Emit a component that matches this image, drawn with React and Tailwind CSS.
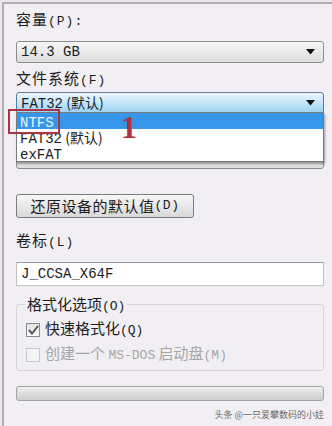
const CJK = "font-['Noto_Sans_CJK_SC',sans-serif]";

// latin parts look like a half-width bitmap font, so keep them mono and a bit smaller
const M = ({ children, className = "" }) => (
  <span className={`font-['Liberation_Mono',monospace] text-[13px] ${className}`}>
    {children}
  </span>
);

const Arrow = () => (
  <svg width="9" height="6" viewBox="0 0 9 6" className="shrink-0">
    <path d="M0 0h9L4.5 5.5z" fill="#111" />
  </svg>
);

const Check = ({ checked, disabled }) => (
  <span
    className={`w-[14px] h-[14px] border flex items-center justify-center shrink-0 ${
      disabled ? "border-[#c8c8c8] bg-[#f4f4f4]" : "border-[#8a8a8a] bg-gradient-to-b from-[#e4e4e4] to-[#fafafa]"
    }`}
  >
    {checked && (
      <svg width="11" height="10" viewBox="0 0 11 10">
        <path d="M1 5l3 3.5L10 1" stroke="#555" strokeWidth="2" fill="none" />
      </svg>
    )}
  </span>
);

export default function App() {
  return (
    <div className={`w-[332px] h-[426px] bg-[#e9e7ea] pt-[2px] pl-[2px] overflow-hidden ${CJK} text-[#1c1c1c]`}>
      <div className="relative h-full border-t-2 border-l-2 border-[#b0aeb2] bg-[#f1eff3] pl-[12px] pr-[8px]">
        {/* capacity */}
        <div className="text-[15px] leading-5 mt-[5px] tracking-[1px]">
          容量<M>(P):</M>
        </div>
        <div className="mt-[9px] h-[22px] border border-[#8c8c8c] rounded-[3px] bg-gradient-to-b from-[#f6f6f6] to-[#dedede] flex items-center justify-between pl-[4px] pr-[8px]">
          <M className="text-[14px]">14.3 GB</M>
          <Arrow />
        </div>

        {/* file system */}
        <div className="text-[15px] leading-5 mt-[5px] tracking-[1px]">
          文件系统<M>(F)</M>
        </div>
        <div className="relative mt-[1px]">
          <div className="h-[22px] border border-[#5e7d93] rounded-t-[3px] bg-gradient-to-b from-[#eaf6fd] via-[#c4e6f8] to-[#9cd0f0] flex items-center justify-between pl-[4px] pr-[8px]">
            <span className="text-[14px]">
              <M className="text-[14px]">FAT32</M> (默认)
            </span>
            <Arrow />
          </div>
          {/* the select hidden under the open list */}
          <div className="h-[22px] mt-[33px] border border-[#8c8c8c] rounded-[3px] bg-gradient-to-b from-[#f6f6f6] to-[#dedede]" />

          {/* open list */}
          <div className="absolute left-0 right-0 top-[20px] border border-[#7a7a7a] bg-white shadow-[1px_2px_2px_rgba(0,0,0,0.35)] text-[14px] leading-[16px]">
            <div className="h-[16px] bg-[#3596ea] text-[#e8f4ff] pl-[3px]">
              <M className="text-[14px]">NTFS</M>
            </div>
            <div className="h-[16px] pl-[3px]">
              <M className="text-[14px]">FAT32</M> (默认)
            </div>
            <div className="h-[16px] pl-[3px]">
              <M className="text-[14px]">exFAT</M>
            </div>
          </div>

          {/* red marker */}
          <div className="absolute left-[-8px] top-[17px] w-[52px] h-[25px] border-2 border-[#a83448]" />
          <div className="absolute left-[105px] top-[20px] text-[32px] leading-[30px] font-bold text-[#b32f44] font-['Liberation_Serif',serif]">
            1
          </div>
        </div>

        {/* restore button */}
        <div className="mt-[25px] w-[178px] h-[24px] border border-[#7c7c7c] rounded-[3px] bg-gradient-to-b from-[#f7f7f7] to-[#d9d9d9] flex items-center justify-center text-[15px] tracking-[0.5px]">
          还原设备的默认值<M>(D)</M>
        </div>

        {/* volume label */}
        <div className="text-[15px] leading-5 mt-[12px] tracking-[1px]">
          卷标<M>(L)</M>
        </div>
        <div className="mt-[9px] h-[24px] border border-[#c3c3c3] border-t-[#9c9c9c] bg-white flex items-center pl-[4px]">
          <M className="text-[14px]">J_CCSA_X64F</M>
        </div>

        {/* format options */}
        <div className="relative mt-[18px] h-[67px] border border-[#d6d4d8] rounded-[3px] pt-[13px] pl-[9px]">
          <div className="absolute left-[8px] top-[-11px] bg-[#f1eff3] px-[2px] text-[15px] leading-5">
            格式化选项<M>(O)</M>
          </div>
          <div className="flex items-center gap-[5px] text-[15px] leading-5">
            <Check checked />
            <span>
              快速格式化<M>(Q)</M>
            </span>
          </div>
          <div className="flex items-center gap-[5px] text-[15px] leading-5 mt-[2px] text-[#a6a6a6]">
            <Check disabled />
            <span>
              创建一个 <M>MS-DOS</M> 启动盘<M>(M)</M>
            </span>
          </div>
        </div>

        {/* progress */}
        <div className="mt-[15px] h-[15px] border border-[#a2a2a2] rounded-[3px] bg-gradient-to-b from-[#f2f2f2] via-[#dcdcdc] to-[#cfcfcf]" />

        <div className="mt-[8px] text-right text-[9px] leading-3 text-[#6a6a6a]">
          头条 @一只爱攀数码的小娃
        </div>
      </div>
    </div>
  );
}
